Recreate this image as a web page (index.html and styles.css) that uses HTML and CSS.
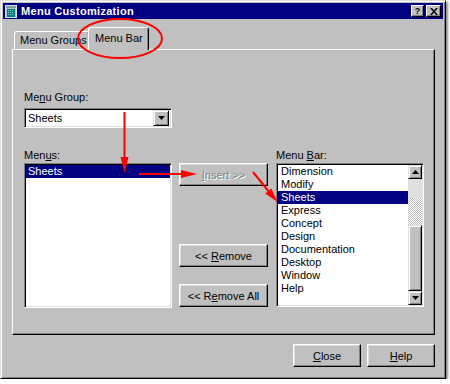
FILE: index.html
```html
<!DOCTYPE html>
<html>
<head>
<meta charset="utf-8">
<title>Menu Customization</title>
<link rel="stylesheet" href="styles.css">
</head>
<body>
<div class="window">
  <div class="titlebar">
    <svg class="app-icon" width="12" height="13" viewBox="0 0 12 13">
      <rect x="0" y="0" width="12" height="13" fill="#c0c0c0"/>
      <rect x="0.5" y="0.5" width="11" height="12" fill="none" stroke="#dfdfdf"/>
      <rect x="1" y="1" width="10" height="2" fill="#80a0a0"/>
      <rect x="2" y="4" width="8" height="8" fill="#008080"/>
      <rect x="3" y="5" width="1" height="1" fill="#7fd0d0"/>
      <rect x="5" y="5" width="1" height="1" fill="#7fd0d0"/>
      <rect x="7" y="5" width="1" height="1" fill="#7fd0d0"/>
      <rect x="3" y="7" width="1" height="1" fill="#7fd0d0"/>
      <rect x="5" y="7" width="1" height="1" fill="#7fd0d0"/>
      <rect x="7" y="7" width="1" height="1" fill="#7fd0d0"/>
      <rect x="3" y="9" width="1" height="1" fill="#7fd0d0"/>
      <rect x="5" y="9" width="1" height="1" fill="#7fd0d0"/>
      <rect x="7" y="9" width="1" height="1" fill="#7fd0d0"/>
    </svg>
    <span class="title">Menu Customization</span>
    <div class="title-buttons">
      <span class="tbtn tbtn-help">?</span>
      <span class="tbtn tbtn-close">
        <svg width="8" height="7" viewBox="0 0 8 7"><path d="M0 0h2l2 2.5 2-2.5h2L5 3.5 8 7H6L4 4.5 2 7H0l3-3.5z" fill="#000"/></svg>
      </span>
    </div>
  </div>

  <div class="tabs">
    <div class="tab">Menu Groups</div>
    <div class="tab tab-active">Menu Bar</div>
  </div>

  <div class="panel">
    <div class="label">Me<u>n</u>u Group:</div>
    <div class="combo">
      <span class="combo-text">Sheets</span>
      <span class="combo-btn">
        <svg width="7" height="4" viewBox="0 0 7 4"><path d="M0 0h7L3.5 4z" fill="#000"/></svg>
      </span>
    </div>

    <div class="lower">
      <div class="col">
        <div class="label">Men<u>u</u>s:</div>
        <div class="list list-left">
          <div class="item selected">Sheets</div>
        </div>
      </div>
      <div class="col-buttons">
        <div class="btn btn-disabled"><span><u>I</u>nsert &gt;&gt;</span></div>
        <div class="btn btn-remove"><span>&lt;&lt; <u>R</u>emove</span></div>
        <div class="btn btn-removeall"><span>&lt;&lt; R<u>e</u>move All</span></div>
      </div>
      <div class="col">
        <div class="label">Menu <u>B</u>ar:</div>
        <div class="list list-right">
          <div class="items">
            <div class="item">Dimension</div>
            <div class="item">Modify</div>
            <div class="item selected">Sheets</div>
            <div class="item">Express</div>
            <div class="item">Concept</div>
            <div class="item">Design</div>
            <div class="item">Documentation</div>
            <div class="item">Desktop</div>
            <div class="item">Window</div>
            <div class="item">Help</div>
          </div>
          <div class="scrollbar">
            <div class="sb-btn">
              <svg width="7" height="4" viewBox="0 0 7 4"><path d="M3.5 0L7 4H0z" fill="#000"/></svg>
            </div>
            <div class="sb-light"></div>
            <div class="sb-dither"></div>
            <div class="sb-thumb"></div>
            <div class="sb-btn">
              <svg width="7" height="4" viewBox="0 0 7 4"><path d="M0 0h7L3.5 4z" fill="#000"/></svg>
            </div>
          </div>
        </div>
      </div>
    </div>
  </div>

  <div class="footer">
    <div class="btn btn-close"><span><u>C</u>lose</span></div>
    <div class="btn btn-help"><span><u>H</u>elp</span></div>
  </div>
</div>

<svg class="annotations" width="450" height="384" viewBox="0 0 450 384">
  <ellipse cx="120" cy="38.5" rx="42" ry="19.5" fill="none" stroke="#f00" stroke-width="2"/>
  <line x1="124.5" y1="112" x2="124.5" y2="160" stroke="#f00" stroke-width="2"/>
  <polygon points="120.5,157 128.5,157 124.5,173" fill="#f00"/>
  <line x1="139" y1="174" x2="184" y2="174" stroke="#f00" stroke-width="2"/>
  <polygon points="181,170 181,178 197,174" fill="#f00"/>
  <line x1="253" y1="172" x2="270" y2="193" stroke="#f00" stroke-width="2"/>
  <polygon points="271.4,188.5 265.2,193.5 277.5,202" fill="#f00"/>
</svg>
</body>
</html>
```

FILE: styles.css
```css
* { box-sizing: border-box; }

body {
  margin: 0;
  background: #fff;
  font-family: "Liberation Sans", Arial, sans-serif;
  font-size: 11px;
  color: #000;
}

.window {
  width: 446px;
  height: 379px;
  background: #c0c0c0;
  border: 1px solid;
  border-color: #dfdfdf #000 #000 #dfdfdf;
  box-shadow: inset 1px 1px #fff, inset -1px -1px #808080, 2px 2px 2px rgba(0,0,0,.45);
  padding: 2px;
  display: flex;
  flex-direction: column;
}

.titlebar {
  height: 16px;
  background: #000080;
  color: #fff;
  display: flex;
  align-items: center;
  padding: 0 2px 0 2px;
  flex-shrink: 0;
}

.app-icon { display: block; flex-shrink: 0; }

.title {
  margin-left: 4px;
  font-weight: bold;
  font-size: 11px;
  letter-spacing: 0.3px;
}

.title-buttons {
  margin-left: auto;
  display: flex;
  gap: 2px;
}

.tbtn {
  height: 12px;
  background: #c0c0c0;
  border: 1px solid;
  border-color: #fff #000 #000 #fff;
  box-shadow: inset -1px -1px #808080;
  color: #000;
  display: flex;
  align-items: center;
  justify-content: center;
  font-weight: bold;
  font-size: 9px;
}
.tbtn-help { width: 13px; }
.tbtn-close { width: 15px; }

.tabs {
  margin-top: 8px;
  height: 22px;
  display: flex;
  align-items: flex-end;
  padding-left: 11px;
  flex-shrink: 0;
}

.tab {
  width: 76px;
  height: 18px;
  border: 1px solid;
  border-bottom: none;
  border-color: #fff #000 transparent #fff;
  border-radius: 3px 3px 0 0;
  box-shadow: inset -1px 0 #808080;
  padding: 2px 0 0 5px;
  line-height: 13px;
  white-space: nowrap;
  overflow: hidden;
}

.tab-active {
  position: relative;
  z-index: 1;
  width: 61px;
  height: 23px;
  margin-left: -2px;
  margin-bottom: -1px;
  background: #c0c0c0;
  padding: 4px 0 0 6px;
}

.panel {
  margin-left: 9px;
  width: 423px;
  height: 286px;
  flex-shrink: 0;
  border: 1px solid;
  border-color: #fff #000 #000 #fff;
  box-shadow: inset -1px -1px #808080;
  padding: 41px 0 0 11px;
}

.label {
  height: 13px;
  line-height: 13px;
  white-space: nowrap;
}

.combo {
  margin-top: 4px;
  width: 148px;
  height: 20px;
  background: #fff;
  border: 1px solid;
  border-color: #808080 #fff #fff #808080;
  box-shadow: inset 1px 1px #000, inset -1px -1px #dfdfdf;
  display: flex;
  align-items: center;
  padding: 0 2px 0 3px;
}

.combo-text { line-height: 13px; }

.combo-btn {
  margin-left: auto;
  width: 16px;
  height: 16px;
  background: #c0c0c0;
  border: 1px solid;
  border-color: #dfdfdf #000 #000 #dfdfdf;
  box-shadow: inset 1px 1px #fff, inset -1px -1px #808080;
  display: flex;
  align-items: center;
  justify-content: center;
}
.combo-btn svg, .sb-btn svg { display: block; }

.lower {
  margin-top: 21px;
  display: flex;
  gap: 7px;
}

.col { width: 148px; }

.col-buttons {
  width: 89px;
  padding-top: 14px;
  margin-right: 1px;
  display: flex;
  flex-direction: column;
}

.list {
  margin-top: 1px;
  width: 148px;
  background: #fff;
  border: 1px solid;
  border-color: #808080 #fff #fff #808080;
  box-shadow: inset 1px 1px #000, inset -1px -1px #dfdfdf;
  padding: 1px;
}

.list-left { height: 145px; }

.list-right {
  height: 144px;
  display: flex;
}

.items { flex: 1; }

.item {
  height: 13px;
  line-height: 13px;
  padding-left: 2px;
  white-space: nowrap;
}
.list-right .item { padding-left: 3px; }

.selected {
  background: #000080;
  color: #fff;
}

.scrollbar {
  width: 14px;
  display: flex;
  flex-direction: column;
}

.sb-btn {
  height: 14px;
  background: #c0c0c0;
  border: 1px solid;
  border-color: #dfdfdf #000 #000 #dfdfdf;
  box-shadow: inset 1px 1px #fff, inset -1px -1px #808080;
  display: flex;
  align-items: center;
  justify-content: center;
}

.sb-light { height: 19px; background: #e0e0e0; }

.sb-dither {
  height: 27px;
  background: repeating-conic-gradient(#fff 0 25%, #c0c0c0 0 50%) 0 0 / 2px 2px;
}

.sb-thumb {
  height: 66px;
  background: #c0c0c0;
  border: 1px solid;
  border-color: #dfdfdf #000 #000 #dfdfdf;
  box-shadow: inset 1px 1px #fff, inset -1px -1px #808080;
}

.btn {
  height: 23px;
  background: #c0c0c0;
  border: 1px solid;
  border-color: #fff #000 #000 #fff;
  box-shadow: inset -1px -1px #808080, inset 1px 1px #dfdfdf;
  display: flex;
  align-items: center;
  justify-content: center;
  white-space: nowrap;
  font-size: 11px;
}

.btn-disabled {
  color: #808080;
  text-shadow: 1px 1px #fff;
}

.btn-remove { margin-top: 58px; }
.btn-removeall { margin-top: 17px; }

.footer {
  margin-top: 9px;
  display: flex;
  justify-content: flex-end;
  gap: 6px;
  padding-right: 8px;
}

.btn-close { width: 68px; }
.btn-help { width: 68px; }

.annotations {
  position: absolute;
  left: 0;
  top: 0;
  pointer-events: none;
}
```
